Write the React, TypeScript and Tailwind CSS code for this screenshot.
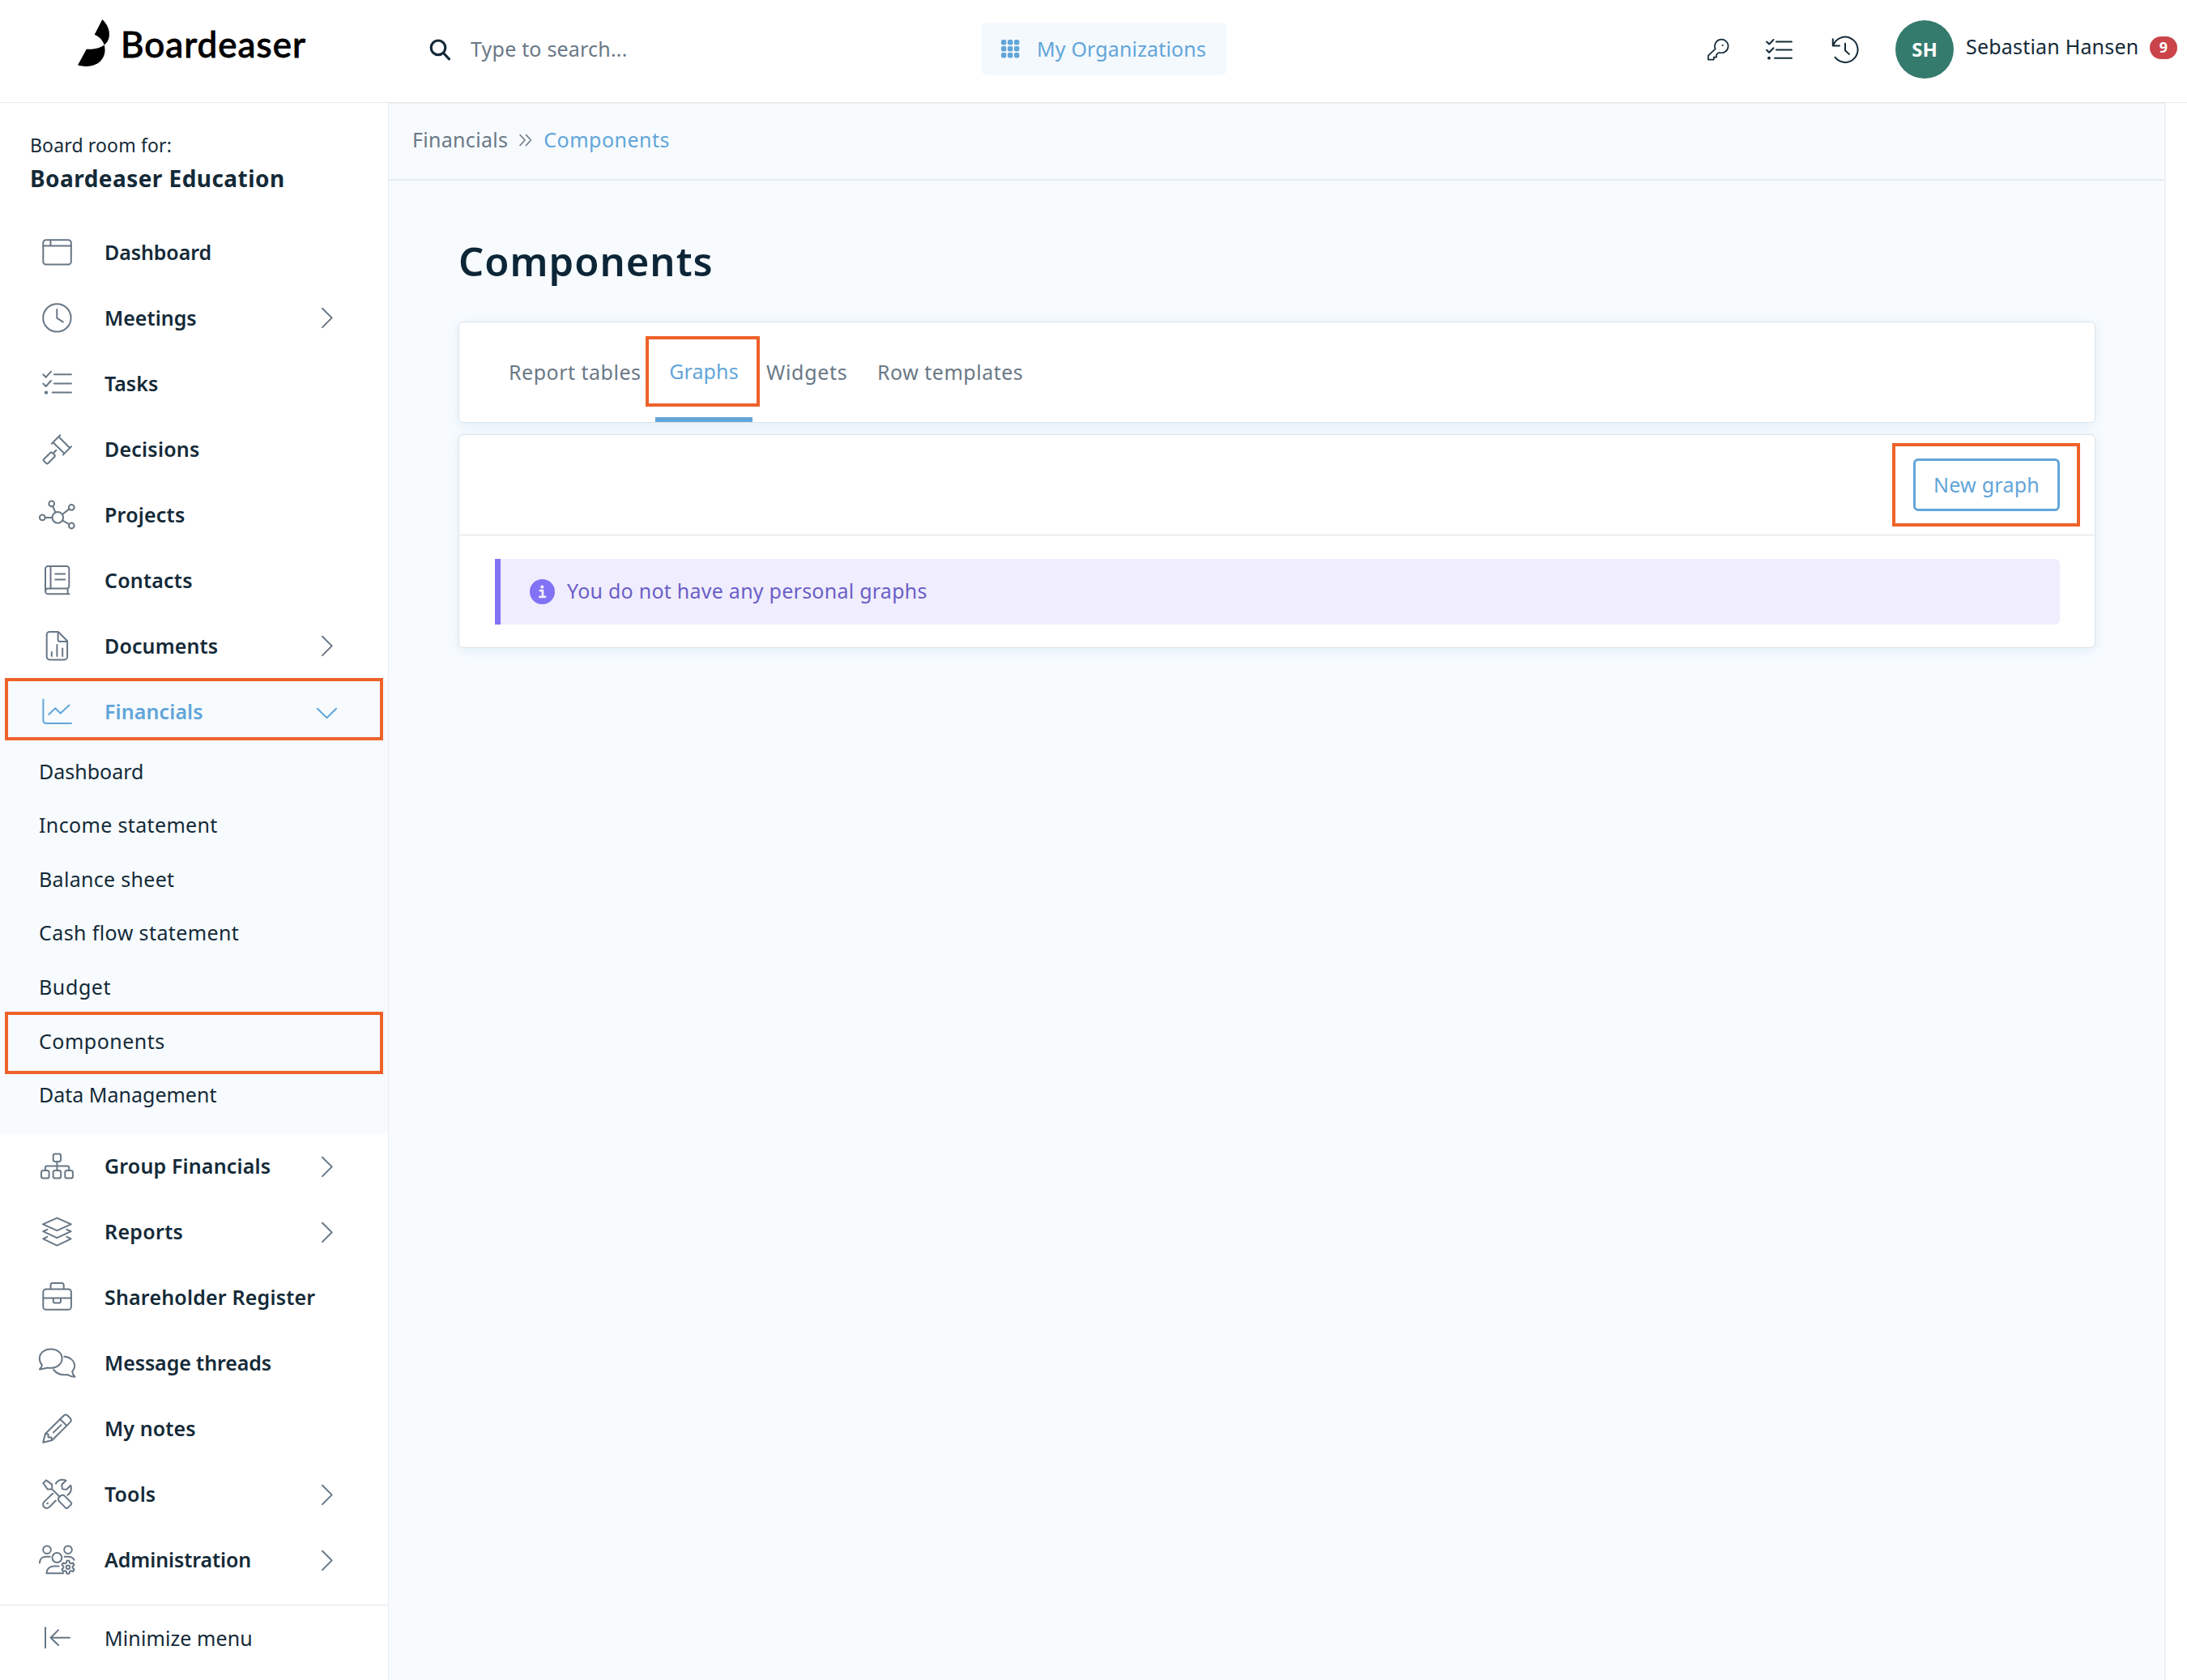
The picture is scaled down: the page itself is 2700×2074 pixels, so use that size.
import type { ReactNode } from "react";
import clsx from "clsx";

type IconProps = { children: ReactNode; className?: string };

function NavIcon({ children, className }: IconProps) {
    return (
        <svg
            width="48"
            height="41"
            viewBox="0 0 48 41"
            fill="none"
            stroke="currentColor"
            strokeWidth="2"
            strokeLinecap="round"
            strokeLinejoin="round"
            className={clsx("shrink-0", className)}
        >
            {children}
        </svg>
    );
}

function HeaderIcon({ children, className }: IconProps) {
    return (
        <svg
            width="40"
            height="40"
            viewBox="0 0 40 40"
            fill="none"
            stroke="currentColor"
            strokeWidth="2"
            strokeLinecap="round"
            strokeLinejoin="round"
            className={clsx("shrink-0", className)}
        >
            {children}
        </svg>
    );
}

const icons = {
    dashboard: (
        <>
            <rect x="7.3" y="5.3" width="34.5" height="30.2" rx="3.5" />
            <path d="M7.3 12.4h34.5M16.4 5.3v7" />
        </>
    ),
    meetings: (
        <>
            <circle cx="24.4" cy="20.4" r="17.2" />
            <path d="M24.3 10v10.6l7.4 4.8" />
        </>
    ),
    tasks: (
        <>
            <path d="M7.3 9.3l3.4 3.4 6.3-7M7.3 20.6l3.4 3.4 6.3-7M20.9 9.2H42M20.9 20.4H42M18.7 31.6H42" />
            <circle cx="11" cy="31.6" r="2.2" fill="currentColor" stroke="none" />
        </>
    ),
    decisions: (
        <>
            <path d="M17.8 13.7L28.2 3.3M31.8 27.6L42 17.3M19.6 12.2l13.8 13.6M26.5 5.2L40.2 19M23.4 21.8l-2.8 2.9" />
            <path d="M16.4 24.8L8 33q-1 1 0 2l3.3 3q1 1 2 0l8.2-8.2q1-1 0-2l-3.1-3q-1-1-2 0z" />
        </>
    ),
    projects: (
        <>
            <circle cx="25.3" cy="23.9" r="6.8" />
            <circle cx="17.7" cy="6.8" r="3.4" />
            <circle cx="42.3" cy="11.3" r="3.4" />
            <circle cx="6.3" cy="23.9" r="3.4" />
            <circle cx="42.3" cy="34" r="3.4" />
            <path d="M19.1 10l3.4 7.7M31 20l8.4-6.6M9.7 23.9h8.8M31.2 27.6l8.2 4.6" />
        </>
    ),
    contacts: (
        <>
            <path d="M39.5 37.3H13.6a3.6 3.6 0 0 1-3.6-3.6V6.3a3.3 3.3 0 0 1 3.3-3.3h23a3 3 0 0 1 3 3v21.6a3 3 0 0 1-3 3H13.4a3.4 3.4 0 0 0-3.3 3.3" />
            <path d="M16.5 3v27.6M37.6 30.8v6.4M22.2 12.4h12M22.2 19.6h12" />
        </>
    ),
    documents: (
        <>
            <path d="M25.8 3H15.3a3.6 3.6 0 0 0-3.6 3.6v27.2a3.6 3.6 0 0 0 3.6 3.6h18.2a3.6 3.6 0 0 0 3.6-3.6V14.2zM25.6 3v9.4a2.5 2.5 0 0 0 2.5 2.5h9" />
            <path d="M17.8 28v5M24.4 19v14M31.2 23.5V33" />
        </>
    ),
    financials: (
        <path d="M7.4 5.6v26a3.4 3.4 0 0 0 3.4 3.4H42M14.3 24l8-7.8 6.4 6.4 10.8-10" />
    ),
    group: (
        <>
            <rect x="19.7" y="4.6" width="9.4" height="9.4" rx="2.4" />
            <rect x="5" y="25" width="9.6" height="9.6" rx="2.4" />
            <rect x="19.6" y="25" width="9.6" height="9.6" rx="2.4" />
            <rect x="34.3" y="25" width="9.6" height="9.6" rx="2.4" />
            <path d="M24.4 14v11M9.9 25v-3.4a2 2 0 0 1 2-2h25.3a2 2 0 0 1 2 2V25" />
        </>
    ),
    reports: (
        <>
            <path d="M24.4 2.6L41.8 10.3 24.4 18.2 7 10.3z" />
            <path d="M12.4 16.8L7.2 19.2l17.2 8 17.2-8-5.2-2.4" />
            <path d="M12.4 25.8L7.2 28.4l17.2 8.2 17.2-8.2-5.2-2.6" />
        </>
    ),
    register: (
        <>
            <rect x="7.3" y="9.4" width="34.6" height="25.4" rx="3.6" />
            <path d="M16.5 9.2V4.4a2.4 2.4 0 0 1 2.4-2.4h11.4a2.4 2.4 0 0 1 2.4 2.4v4.8M7.3 20.6h34.6M19.8 20.8v3.6a2 2 0 0 0 2 2h5.2a2 2 0 0 0 2-2v-3.6" />
        </>
    ),
    messages: (
        <>
            <path d="M12.2 25.6c-3 .8-6 1.8-9.3 1.9 1.9-1.8 3-3.2 2.9-5.4C3.7 19.7 2.8 17 2.8 14 2.8 7.4 9 2.5 16.8 2.5S30.6 7.4 30.6 14s-6 11.8-13.8 11.8c-1.6 0-3.1 0-4.6-.2z" />
            <path d="M33.4 11.8C40.5 12.2 46.2 17 46.2 23.6c0 2.4-1.3 4.6-3 6.5 0 2.5 1.3 4.7 3.3 6.7-3.7 0-6.7-1.3-9-2.7-7 1-13-.8-17.3-6.1" />
        </>
    ),
    notes: (
        <>
            <path d="M7.2 36.7L10 26 32.8 3.5q2.2-1.9 4.6 0l3.4 3.5q1.9 2.2 0 4.6L18.4 34z" />
            <path d="M28.2 8l8 7.8M19.9 24.5l9.6-9.4M10.4 26l3.2.8v3.8h3.7l1 3" />
        </>
    ),
    tools: (
        <>
            <path d="M7.4 6l3.6-3.6 7.2 5.2v5.8h-5.6zM18.2 13.4l9.4 9.3" />
            <path d="M26.2 24l3.4-3q2.5-.8 4 .6l7.9 8q1.5 1.6 0 3l-3.8 3.8q-1.4 1.3-2.8 0l-7.6-7.8q-2-2.2-1.1-4.6z" />
            <path d="M23 6.4C25.4 2.6 30 .8 35.5 2.7l-5.3 5.1.6 4.6q.3 1 1.3 1.2l4.1.2 5-5.2c1.5 4.5.2 9.2-3.8 12.2" />
            <path d="M19.2 18.8L8.6 28.9c-2 2-2 4.8-.2 6.6s4.8 1.9 6.7-.1l7.7-7.9" />
            <circle cx="12.6" cy="31" r="1.3" fill="currentColor" stroke="none" />
        </>
    ),
    administration: (
        <>
            <circle cx="12" cy="7.2" r="4.8" />
            <circle cx="38" cy="7.2" r="4.8" />
            <circle cx="24.4" cy="17" r="5.9" />
            <path d="M2.9 23.4c.2-4.3 3-7.6 7.4-7.6h5.5M33.6 15.8h4.5c3.2 0 5.9 1.3 7.6 3.9M26.6 27.5h-6c-5.6 0-9.2 3.8-9.2 8.8h20.8" />
            <path d="M36.6 20.7h2.8l.7 2.6 1.5.9 2.6-.8 1.4 2.5-1.9 1.9v1.8l1.9 1.9-1.4 2.5-2.6-.8-1.5.9-.7 2.6h-2.8l-.7-2.6-1.5-.9-2.6.8-1.4-2.5 1.9-1.9v-1.8l-1.9-1.9 1.4-2.5 2.6.8 1.5-.9z" />
            <circle cx="38" cy="28.7" r="2.2" />
        </>
    ),
    minimize: <path d="M10 7.2v25M40 19.7H16.6M26 10.4l-9.4 9.3 9.4 9.3" />,
};

type NavEntry = {
    label: string;
    icon: keyof typeof icons;
    tracking: string;
    expandable?: boolean;
};

const topNav: NavEntry[] = [
    { label: "Dashboard", icon: "dashboard", tracking: "tracking-[-0.1px]" },
    { label: "Meetings", icon: "meetings", tracking: "tracking-[0px]", expandable: true },
    { label: "Tasks", icon: "tasks", tracking: "tracking-[0px]" },
    { label: "Decisions", icon: "decisions", tracking: "tracking-[0.2px]" },
    { label: "Projects", icon: "projects", tracking: "tracking-[0.2px]" },
    { label: "Contacts", icon: "contacts", tracking: "tracking-[0.2px]" },
    { label: "Documents", icon: "documents", tracking: "tracking-[0.1px]", expandable: true },
];

const financialsNav = [
    { label: "Dashboard", tracking: "tracking-[0px]" },
    { label: "Income statement", tracking: "tracking-[0.35px]" },
    { label: "Balance sheet", tracking: "tracking-[0.3px]" },
    { label: "Cash flow statement", tracking: "tracking-[0.4px]" },
    { label: "Budget", tracking: "tracking-[0.6px]" },
    { label: "Components", tracking: "tracking-[0.5px]" },
    { label: "Data Management", tracking: "tracking-[0px]" },
];

const bottomNav: NavEntry[] = [
    { label: "Group Financials", icon: "group", tracking: "tracking-[0.15px]", expandable: true },
    { label: "Reports", icon: "reports", tracking: "tracking-[0.3px]", expandable: true },
    { label: "Shareholder Register", icon: "register", tracking: "tracking-[0.18px]" },
    { label: "Message threads", icon: "messages", tracking: "tracking-[-0.1px]" },
    { label: "My notes", icon: "notes", tracking: "tracking-[0.1px]" },
    { label: "Tools", icon: "tools", tracking: "tracking-[0.1px]", expandable: true },
    { label: "Administration", icon: "administration", tracking: "tracking-[-0.1px]", expandable: true },
];

// Orange frame laid over whatever it calls attention to
function Highlight({ className }: { className: string }) {
    return <div className={clsx("pointer-events-none absolute border-4 border-[#ee622a]", className)} />;
}

function NavRow({ item }: { item: NavEntry }) {
    return (
        <a className="flex h-[81px] items-center pl-[46px]">
            <NavIcon className="text-[#687785]">{icons[item.icon]}</NavIcon>
            <span className={clsx("ml-[35px] font-semibold whitespace-nowrap", item.tracking)}>{item.label}</span>
            {item.expandable && (
                <svg
                    width="26"
                    height="27"
                    viewBox="0 0 26 27"
                    fill="none"
                    stroke="currentColor"
                    strokeWidth="2"
                    strokeLinecap="round"
                    strokeLinejoin="round"
                    className="mr-[62px] ml-auto text-[#687785]"
                >
                    <path d="M7 1.7L18.7 13.4 7 25.1" />
                </svg>
            )}
        </a>
    );
}

function Header() {
    return (
        <header className="flex h-[127px] shrink-0 items-center border-b border-[#e7ebee] bg-white pb-[5px]">
            {/* Logo */}
            <div className="flex w-[520px] items-center pb-4 pl-[90px]">
                <svg width="52" height="64" viewBox="0 0 52 64" className="shrink-0">
                    <path d="M36.3 3C42.5 8.5 46 17 44.7 24.5 44 28.8 41.8 32 38.7 34.5 36.8 28.5 32.5 24 26.7 21.7z" />
                    <path d="M16.7 39.7C25.5 40.2 33.5 38.500 38.7 34.5 40.6 41.5 39.5 48.5 34.5 54 27.5 61.3 16.5 62.2 6 59.6z" />
                </svg>
                <span className="mt-[3px] ml-[7px] font-[Lato,sans-serif] text-[44px] leading-none font-medium tracking-[1px] text-black [-webkit-text-stroke:0.8px_black]">
                    Boardeaser
                </span>
            </div>

            {/* Search */}
            <div className="flex w-[692px] items-center">
                <HeaderIcon className="ml-[3px]">
                    <g strokeWidth="3.2">
                        <circle cx="18" cy="17.8" r="8.8" />
                        <path d="M24.5 24.5l7 7.3" />
                    </g>
                </HeaderIcon>
                <span className="ml-[18px] tracking-[0.2px] text-[#6a7886]">Type to search...</span>
            </div>

            <button className="flex h-[65px] w-[302px] items-center rounded-md bg-[#f4f9fe] pl-6 text-[#62a5d9]">
                <svg width="23" height="23" viewBox="0 0 23 23" fill="currentColor">
                    {[0, 8, 16].map((y) =>
                        [0, 8, 16].map((x) => <rect key={`${x}-${y}`} x={x} y={y} width="6.4" height="6.4" rx="1.8" />)
                    )}
                </svg>
                <span className="ml-[21px] tracking-[0.15px] whitespace-nowrap">My Organizations</span>
            </button>

            {/* User area */}
            <div className="ml-auto flex items-center">
                <HeaderIcon>
                    <path
                        strokeWidth="1.7"
                        d="M16.7 19.3A8.3 8.3 0 1 1 22.3 24l-2 .4-2.3 2.3v3h-3.2v2.9H7.9v-5z"
                    />
                    <circle cx="25.7" cy="15" r="1.1" fill="currentColor" stroke="none" />
                </HeaderIcon>
                <HeaderIcon className="ml-[35px]">
                    <path d="M5 10.6l3.2 2.9L13.5 8M5 20.8l3.2 2.9 5.3-5.5M16.9 10.5h19M16.9 20.6h19M15 30.7h21" />
                    <circle cx="8" cy="30.7" r="1.9" fill="currentColor" stroke="none" />
                </HeaderIcon>
                <HeaderIcon className="ml-[42px]">
                    <path d="M4.8 7.2v8.2H13M5.2 15.2A15.6 15.6 0 1 1 7.5 29.7M20 12.8v8.4l4.9 4.7" />
                </HeaderIcon>
                <div className="ml-[42px] flex size-[72px] items-center justify-center rounded-full bg-[#347b6e] text-2xl font-bold text-white">
                    SH
                </div>
                <span className="mb-[6px] ml-[15px] w-[215px] tracking-[0.2px] whitespace-nowrap">Sebastian Hansen</span>
                <span className="mr-3 mb-1 ml-3 flex h-7 w-[34px] items-center justify-center rounded-[14px] bg-[#cb444a] text-[18px] font-bold text-white">
                    9
                </span>
            </div>
        </header>
    );
}

function Sidebar() {
    return (
        <aside className="flex w-[480px] shrink-0 flex-col border-r border-[#eaeef1] bg-white">
            <div className="h-[144px] pt-[34px] pl-[37px]">
                <div className="text-[23px] leading-[36px] tracking-[0.15px]">Board room for:</div>
                <div className="mt-[5px] text-[28px] leading-[36px] font-bold tracking-[0.45px]">Boardeaser Education</div>
            </div>

            {topNav.map((item) => (
                <NavRow key={item.label} item={item} />
            ))}

            <div className="relative h-[561.5px] bg-[#f7fbfe]">
                <a className="flex h-[81px] items-center pl-[46px] text-[#62a5d9]">
                    <NavIcon>{icons.financials}</NavIcon>
                    <span className="ml-[35px] font-semibold tracking-[0.1px]">Financials</span>
                    <svg
                        width="27"
                        height="27"
                        viewBox="0 0 27 27"
                        fill="none"
                        stroke="currentColor"
                        strokeWidth="2"
                        strokeLinecap="round"
                        strokeLinejoin="round"
                        className="mr-[62px] ml-auto"
                    >
                        <path d="M1.9 9.8L13.5 21.3 25.1 9.8" />
                    </svg>
                </a>
                {financialsNav.map((item) => (
                    <a key={item.label} className={clsx("flex h-[66.6px] items-center pl-[48px]", item.tracking)}>
                        {item.label}
                    </a>
                ))}
                <Highlight className="top-[-1px] left-[6px] h-[77px] w-[467px]" />
                <Highlight className="top-[411px] left-[6px] h-[77px] w-[467px]" />
            </div>

            {bottomNav.map((item) => (
                <NavRow key={item.label} item={item} />
            ))}

            <a className="mt-[14.5px] flex h-[82px] items-center border-t border-[#dfe3e6] pl-[46px]">
                <NavIcon className="text-[#687785]">{icons.minimize}</NavIcon>
                <span className="ml-[35px] tracking-[0.1px]">Minimize menu</span>
            </a>
        </aside>
    );
}

function Tabs() {
    return (
        <div className="relative flex h-[125px] rounded-md border border-[#dce3e9] bg-white pl-[61px] text-[#6a7886] shadow-[0_3px_14px_rgba(98,165,217,0.15)]">
            <div className="flex w-[181px] items-center tracking-[0.5px] whitespace-nowrap">Report tables</div>
            <div className="flex w-[120px] items-center justify-center border-b-[6px] border-[#62a5d9] pt-[5px] tracking-[0.1px] text-[#62a5d9]">
                Graphs
            </div>
            <div className="flex w-[135px] items-center pl-[17px] tracking-[0.7px]">Widgets</div>
            <div className="flex items-center pl-[19px] tracking-[0.5px] whitespace-nowrap">Row templates</div>
            <Highlight className="top-[17px] left-[230px] h-[87px] w-[141px]" />
        </div>
    );
}

function GraphsPanel() {
    return (
        <div className="mt-[14px] h-[264px] rounded-md border border-[#dce3e9] bg-white shadow-[0_3px_14px_rgba(98,165,217,0.15)]">
            <div className="relative flex h-[124px] items-center justify-end border-b border-[#dce3e9] pr-[43px]">
                <button className="h-[65px] w-[181px] rounded-md border-[3px] border-[#62a5d9] tracking-[0.25px] text-[#62a5d9]">
                    New graph
                </button>
                <Highlight className="top-[10px] right-[18px] h-[103px] w-[232px]" />
            </div>
            <div className="pt-[29px] pr-[43px] pl-11">
                <div className="flex h-[81px] items-center rounded-r-md border-l-[7px] border-[#8272f5] bg-[#f0edfe] pl-9 text-[#6b5fc7]">
                    <svg width="31" height="31" viewBox="0 0 31 31">
                        <circle cx="15.5" cy="15.5" r="15.5" fill="#8272f5" />
                        <circle cx="15.3" cy="9.6" r="2.1" fill="#f0edfe" />
                        <path
                            d="M13 14.2h3v7.4M12.3 21.8h6.8"
                            fill="none"
                            stroke="#f0edfe"
                            strokeWidth="2.8"
                            strokeLinecap="round"
                            strokeLinejoin="round"
                        />
                    </svg>
                    <span className="mb-px ml-[15px] tracking-[0.25px]">You do not have any personal graphs</span>
                </div>
            </div>
        </div>
    );
}

export default function App() {
    return (
        <div className="flex h-[2074px] w-[2700px] flex-col overflow-hidden bg-white font-['Noto_Sans',sans-serif] text-[25px] text-[#142a38]">
            <Header />
            <div className="flex min-h-0 flex-1">
                <Sidebar />
                <main className="mr-[26px] flex-1 border-t border-r-2 border-t-[#e7ebee] border-r-[#eef1f4] bg-[#f7fbfe]">
                    <nav className="flex h-[95px] items-center border-b-2 border-[#e7ecf0] pb-[3px] pl-[29px] text-[#6a7886]">
                        <span className="tracking-[0.3px]">Financials</span>
                        <svg
                            width="20"
                            height="20"
                            viewBox="0 0 20 20"
                            fill="none"
                            stroke="currentColor"
                            strokeWidth="1.6"
                            strokeLinecap="round"
                            strokeLinejoin="round"
                            className="ml-3"
                        >
                            <path d="M3 3.5l6 6.5-6 6.5M10.500 3.5l6 6.5-6 6.5" />
                        </svg>
                        <span className="ml-3 tracking-[0.5px] text-[#62a5d9]">Components</span>
                    </nav>
                    <div className="pr-[85px] pl-[86px]">
                        <h1 className="h-[174px] pt-[66px] text-[49px] leading-[66px] font-semibold tracking-[1px] text-[#0c2637]">
                            Components
                        </h1>
                        <Tabs />
                        <GraphsPanel />
                    </div>
                </main>
            </div>
        </div>
    );
}
